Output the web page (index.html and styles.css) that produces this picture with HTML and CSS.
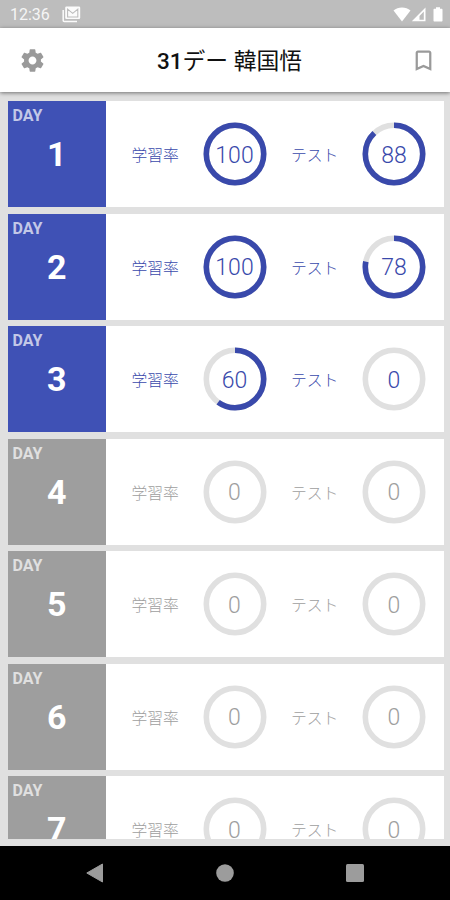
FILE: index.html
```html
<!DOCTYPE html>
<html lang="ja">
<head>
    <meta charset="UTF-8">
    <meta name="viewport" content="width=device-width, initial-scale=1.0">
    <title>31デー 韓国悟</title>
    <link rel="stylesheet" href="styles.css">
</head>
<body>

    <!-- Status bar -->
    <div class="status-bar">
        <span class="clock">12:36</span>
        <svg class="mail-icon" width="19" height="17" viewBox="0 0 19 17">
            <path d="M1.2 4v10.6c0 .6.4 1 1 1H15" fill="none" stroke="#fff" stroke-width="1.5"/>
            <rect x="3.2" y="0.6" width="15" height="12.4" rx="1.2" fill="#fff"/>
            <path d="M5.6 11V3.200l5.100 4.200 5.100-4.200V11z" fill="none" stroke="#bdbdbd" stroke-width="1.100"/>
        </svg>
        <div class="status-icons">
            <svg width="18" height="15" viewBox="0 0 18 15">
                <path d="M9 14.5L.5 3.6C2.8 1.6 5.8 .5 9 .5s6.2 1.1 8.5 3.1z" fill="#fff"/>
            </svg>
            <svg width="15" height="15" viewBox="0 0 15 15">
                <path d="M14.5 .5v13.8H.8zM12.8 4.6L8.5 9v3.7h4.3z" fill="#fff" fill-rule="evenodd"/>
            </svg>
            <svg class="battery" width="10" height="15" viewBox="0 0 10 15">
                <path d="M3 .3h4v1.500h1.500c.6 0 1 .4 1 1v10.700c0 .6-.4 1-1 1h-7c-.6 0-1-.4-1-1V2.800c0-.6.4-1 1-1H3z" fill="#fff"/>
            </svg>
        </div>
    </div>

    <header>
        <svg class="settings" width="27" height="27" viewBox="0 0 24 24">
            <path fill="#9a9a9a" d="M19.430 12.980c.04-.32.07-.64.07-.98s-.03-.66-.07-.98l2.110-1.650c.19-.15.24-.42.12-.64l-2-3.460c-.12-.22-.39-.3-.61-.22l-2.490 1c-.52-.4-1.080-.73-1.690-.98l-.38-2.650C14.460 2.180 14.250 2 14 2h-4c-.25 0-.46.18-.49.42l-.38 2.650c-.61.25-1.170.59-1.690.98l-2.490-1c-.23-.09-.49 0-.61.22l-2 3.460c-.13.22-.07.49.12.64l2.110 1.650c-.04.32-.07.65-.07.98s.03.66.07.98l-2.110 1.650c-.19.15-.24.42-.12.64l2 3.460c.12.22.39.3.61.22l2.490-1c.52.4 1.080.73 1.690.98l.38 2.650c.03.24.24.42.49.42h4c.25 0 .46-.18.49-.42l.38-2.650c.61-.25 1.170-.59 1.690-.98l2.490 1c.23.09.49 0 .61-.22l2-3.460c.12-.22.07-.49-.12-.64l-2.110-1.650zM12 15.500c-1.930 0-3.500-1.570-3.500-3.500s1.570-3.500 3.500-3.500 3.500 1.570 3.500 3.500-1.570 3.500-3.500 3.500z"/>
        </svg>
        <h1>31<span class="title-ja">デー 韓国悟</span></h1>
        <svg class="bookmark" width="27" height="27" viewBox="0 0 24 24">
            <path fill="#9a9a9a" d="M17 3H7c-1.100 0-1.990.9-1.990 2L5 21l7-3 7 3V5c0-1.100-.9-2-2-2zm0 15l-5-2.180L7 18V5h10v13z"/>
        </svg>
    </header>

    <main class="day-list">
        <div class="day-card active">
            <div class="day-box"><span class="day-label">DAY</span><span class="day-number">1</span></div>
            <div class="stat">
                <span class="stat-label">学習率</span>
                <div class="ring">
                    <svg viewBox="0 0 64 64"><circle class="track" cx="32" cy="32" r="28.700"/><circle class="bar" cx="32" cy="32" r="28.700"/></svg>
                    <span class="value">100</span>
                </div>
            </div>
            <div class="stat">
                <span class="stat-label">テスト</span>
                <div class="ring">
                    <svg viewBox="0 0 64 64"><circle class="track" cx="32" cy="32" r="28.700"/><circle class="bar" cx="32" cy="32" r="28.700" pathLength="100" stroke-dasharray="88 100"/></svg>
                    <span class="value">88</span>
                </div>
            </div>
        </div>

        <div class="day-card active">
            <div class="day-box"><span class="day-label">DAY</span><span class="day-number">2</span></div>
            <div class="stat">
                <span class="stat-label">学習率</span>
                <div class="ring">
                    <svg viewBox="0 0 64 64"><circle class="track" cx="32" cy="32" r="28.700"/><circle class="bar" cx="32" cy="32" r="28.700"/></svg>
                    <span class="value">100</span>
                </div>
            </div>
            <div class="stat">
                <span class="stat-label">テスト</span>
                <div class="ring">
                    <svg viewBox="0 0 64 64"><circle class="track" cx="32" cy="32" r="28.700"/><circle class="bar" cx="32" cy="32" r="28.700" pathLength="100" stroke-dasharray="78 100"/></svg>
                    <span class="value">78</span>
                </div>
            </div>
        </div>

        <div class="day-card active">
            <div class="day-box"><span class="day-label">DAY</span><span class="day-number">3</span></div>
            <div class="stat">
                <span class="stat-label">学習率</span>
                <div class="ring">
                    <svg viewBox="0 0 64 64"><circle class="track" cx="32" cy="32" r="28.700"/><circle class="bar" cx="32" cy="32" r="28.700" pathLength="100" stroke-dasharray="60 100"/></svg>
                    <span class="value">60</span>
                </div>
            </div>
            <div class="stat">
                <span class="stat-label">テスト</span>
                <div class="ring">
                    <svg viewBox="0 0 64 64"><circle class="track" cx="32" cy="32" r="28.700"/></svg>
                    <span class="value">0</span>
                </div>
            </div>
        </div>

        <!-- Days not started yet -->
        <div class="day-card">
            <div class="day-box"><span class="day-label">DAY</span><span class="day-number">4</span></div>
            <div class="stat">
                <span class="stat-label">学習率</span>
                <div class="ring">
                    <svg viewBox="0 0 64 64"><circle class="track" cx="32" cy="32" r="28.700"/></svg>
                    <span class="value">0</span>
                </div>
            </div>
            <div class="stat">
                <span class="stat-label">テスト</span>
                <div class="ring">
                    <svg viewBox="0 0 64 64"><circle class="track" cx="32" cy="32" r="28.700"/></svg>
                    <span class="value">0</span>
                </div>
            </div>
        </div>

        <div class="day-card">
            <div class="day-box"><span class="day-label">DAY</span><span class="day-number">5</span></div>
            <div class="stat">
                <span class="stat-label">学習率</span>
                <div class="ring">
                    <svg viewBox="0 0 64 64"><circle class="track" cx="32" cy="32" r="28.700"/></svg>
                    <span class="value">0</span>
                </div>
            </div>
            <div class="stat">
                <span class="stat-label">テスト</span>
                <div class="ring">
                    <svg viewBox="0 0 64 64"><circle class="track" cx="32" cy="32" r="28.700"/></svg>
                    <span class="value">0</span>
                </div>
            </div>
        </div>

        <div class="day-card">
            <div class="day-box"><span class="day-label">DAY</span><span class="day-number">6</span></div>
            <div class="stat">
                <span class="stat-label">学習率</span>
                <div class="ring">
                    <svg viewBox="0 0 64 64"><circle class="track" cx="32" cy="32" r="28.700"/></svg>
                    <span class="value">0</span>
                </div>
            </div>
            <div class="stat">
                <span class="stat-label">テスト</span>
                <div class="ring">
                    <svg viewBox="0 0 64 64"><circle class="track" cx="32" cy="32" r="28.700"/></svg>
                    <span class="value">0</span>
                </div>
            </div>
        </div>

        <div class="day-card">
            <div class="day-box"><span class="day-label">DAY</span><span class="day-number">7</span></div>
            <div class="stat">
                <span class="stat-label">学習率</span>
                <div class="ring">
                    <svg viewBox="0 0 64 64"><circle class="track" cx="32" cy="32" r="28.700"/></svg>
                    <span class="value">0</span>
                </div>
            </div>
            <div class="stat">
                <span class="stat-label">テスト</span>
                <div class="ring">
                    <svg viewBox="0 0 64 64"><circle class="track" cx="32" cy="32" r="28.700"/></svg>
                    <span class="value">0</span>
                </div>
            </div>
        </div>
    </main>

    <!-- Android navigation -->
    <nav class="nav-bar">
        <svg width="20" height="20" viewBox="0 0 20 20"><path d="M1.800 10L17.500 1v18z" fill="#9c9c9c" stroke="#9c9c9c" stroke-linejoin="round"/></svg>
        <svg width="20" height="20" viewBox="0 0 20 20"><circle cx="10" cy="10" r="8.800" fill="#9c9c9c"/></svg>
        <svg width="20" height="20" viewBox="0 0 20 20"><rect x="1" y="1" width="18" height="18" rx="1.500" fill="#9c9c9c"/></svg>
    </nav>

</body>
</html>
```

FILE: styles.css
```css
* {
    margin: 0;
    padding: 0;
    box-sizing: border-box;
    font-family: Roboto, 'Noto Sans CJK JP', sans-serif;
}

body {
    width: 450px;
    height: 900px;
    background: #e0e0e0;
    display: flex;
    flex-direction: column;
    overflow: hidden;
}

svg {
    display: block;
}

/* Status bar */
.status-bar {
    height: 28px;
    background: #bdbdbd;
    display: flex;
    align-items: center;
    flex-shrink: 0;
    padding: 1px 7px 0 10px;
}

.clock {
    width: 52px;
    color: #f5f5f5;
    font-size: 16px;
}

.mail-icon {
    opacity: 0.95;
}

.status-icons {
    display: flex;
    margin-left: auto;
}

.battery {
    margin-left: 7px;
}

/* Header */
header {
    height: 64px;
    flex-shrink: 0;
    background: #ffffff;
    box-shadow: 0 1px 4px rgba(0, 0, 0, 0.5);
    display: flex;
    align-items: center;
    justify-content: space-between;
    padding: 0 13px 0 19px;
    z-index: 1;
}

header h1 {
    font-size: 22.5px;
    font-weight: 500;
    line-height: 32px;
    padding: 3px 0 0 3px;
    color: #111111;
}

.title-ja {
    font-size: 22.8px;
    font-weight: 400;
}

/* Day list */
.day-list {
    flex: 1;
    min-height: 0;
    margin: 9px 6.5px 7px 7.5px;
    display: flex;
    flex-direction: column;
    gap: 6.5px;
    overflow: hidden;
}

.day-card {
    height: 106px;
    flex-shrink: 0;
    display: flex;
    background: #ffffff;
    color: #9e9e9e;
}

.day-card.active {
    color: #3949ab;
}

.day-box {
    width: 98.5px;
    flex-shrink: 0;
    background: #9e9e9e;
    display: flex;
    flex-direction: column;
    padding: 5px 5px;
    margin-right: 25.5px;
}

.active .day-box {
    background: #3f51b5;
}

.day-label {
    font-size: 16px;
    font-weight: 700;
    line-height: 20px;
    color: rgba(255, 255, 255, 0.7);
}

.day-number {
    font-size: 34px;
    font-weight: 700;
    line-height: 40px;
    margin-top: 8px;
    text-align: center;
    color: #ffffff;
}

.stat {
    width: 159.5px;
    flex-shrink: 0;
    display: flex;
    align-items: center;
}

.stat-label {
    width: 71px;
    font-size: 15.8px;
    font-weight: 300;
    padding-top: 1px;
}

/* Progress rings */
.ring {
    width: 64px;
    height: 64px;
    display: grid;
    place-items: center;
}

.ring svg,
.ring .value {
    grid-area: 1 / 1;
}

.ring svg {
    width: 64px;
    height: 64px;
    transform: rotate(-90deg);
}

.ring circle {
    fill: none;
    stroke-width: 5.6;
}

.track {
    stroke: #e0e0e0;
}

.bar {
    stroke: #3949ab;
}

.value {
    font-size: 23px;
    font-weight: 300;
    line-height: 28px;
    padding-top: 3px;
}

/* Navigation bar */
.nav-bar {
    height: 54px;
    flex-shrink: 0;
    background: #000000;
    display: flex;
    align-items: center;
    justify-content: space-between;
    padding: 0 85px;
}
```
